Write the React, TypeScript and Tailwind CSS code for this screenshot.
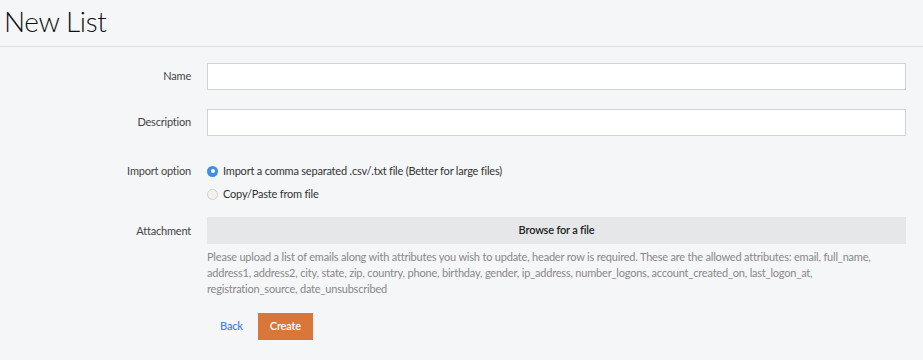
export default function App() {
  const font = { fontFamily: '"Source Sans Pro", Lato, "Noto Sans", sans-serif' };
  return (
    <div className="min-h-[360px] w-full bg-[#f5f6f8] text-[#333]" style={font}>
      <div className="h-[47px] border-b border-[#dedfe1] pl-[4px]">
        <h1 className="text-[28px] font-light leading-[42px] tracking-[-0.4px] text-[#111]">New List</h1>
      </div>

      <form className="pt-[16px] pr-[17px] text-[11px] tracking-[-0.2px]">
        <div className="flex items-center">
          <label className="w-[191px] shrink-0 text-right text-[#444]">Name</label>
          <input type="text" className="ml-[16px] h-[27px] flex-1 border border-[#d2d3d6] bg-white outline-none" />
        </div>

        <div className="mt-[19px] flex items-center">
          <label className="w-[191px] shrink-0 text-right text-[#444]">Description</label>
          <input type="text" className="ml-[16px] h-[27px] flex-1 border border-[#d2d3d6] bg-white outline-none" />
        </div>

        <div className="mt-[27px] flex items-start">
          <label className="w-[191px] shrink-0 text-right leading-[16px] text-[#444]">Import option</label>
          <div className="ml-[16px] flex flex-col gap-[7px] leading-[16px] text-[#333]">
            <div className="flex items-center">
              <span className="flex h-[11px] w-[11px] items-center justify-center rounded-full bg-[#3d8ee8]">
                <span className="h-[4px] w-[4px] rounded-full bg-white" />
              </span>
              <span className="ml-[5px]">Import a comma separated .csv/.txt file (Better for large files)</span>
            </div>
            <div className="flex items-center">
              <span className="h-[11px] w-[11px] rounded-full border border-[#cfd0d3] bg-[#f2f2f2]" />
              <span className="ml-[5px]">Copy/Paste from file</span>
            </div>
          </div>
        </div>

        <div className="mt-[15px] flex items-start">
          <label className="w-[191px] shrink-0 pt-[6px] text-right leading-[16px] text-[#444]">Attachment</label>
          <div className="ml-[16px] flex-1">
            <div className="flex h-[27px] items-center justify-center bg-[#e6e7e9] font-semibold text-[#222]">
              Browse for a file
            </div>
            <p className="mt-[5px] pr-[16px] leading-[16px] text-[#888]">
              Please upload a list of emails along with attributes you wish to update, header row is required. These are the allowed attributes: email, full_name, address1, address2, city, state, zip, country, phone, birthday, gender, ip_address, number_logons, account_created_on, last_logon_at, registration_source, date_unsubscribed
            </p>
            <div className="mt-[16px] flex items-center">
              <a className="ml-[13px] font-semibold text-[#4a86d6]">Back</a>
              <button type="button" className="ml-[15px] h-[27px] w-[55px] bg-[#d9763a] font-semibold text-white">
                Create
              </button>
            </div>
          </div>
        </div>
      </form>
    </div>
  );
}
